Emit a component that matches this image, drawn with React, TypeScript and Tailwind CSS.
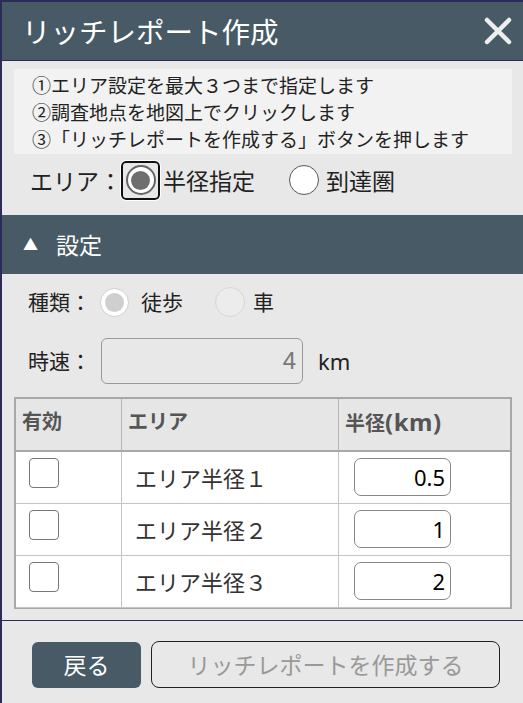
import React from 'react';

const font = "font-['Meiryo','Noto_Sans_CJK_JP',sans-serif]";

const rows = [
  { name: 'エリア半径１', radius: '0.5' },
  { name: 'エリア半径２', radius: '1' },
  { name: 'エリア半径３', radius: '2' },
];

function CloseIcon() {
  return (
    <svg width="28" height="28" viewBox="0 0 28 28" fill="none">
      <path d="M3 3L25 25M25 3L3 25" stroke="#eeeeee" strokeWidth="4.5" strokeLinecap="round" />
    </svg>
  );
}

export default function App() {
  return (
    <div
      className={`w-[523px] h-[703px] bg-[#e8e8e8] border-l-2 border-t-2 border-[#2b2d58] flex flex-col text-[#222] ${font}`}
    >
      <header className="h-[59px] shrink-0 bg-[#475a66] border-b border-[#2b2d58] flex items-center justify-between pl-[20px] pr-[11px]">
        <h1 className="text-[28.5px] text-white leading-none">リッチレポート作成</h1>
        <CloseIcon />
      </header>

      <div className="pl-[12px] pr-[11px] pt-[8px]">
        <div className="h-[85px] bg-[#f2f2f2] pl-[18px] pt-[2px] text-[19px] leading-[27px] text-[#222]">
          <p>①エリア設定を最大３つまで指定します</p>
          <p>②調査地点を地図上でクリックします</p>
          <p>③「リッチレポートを作成する」ボタンを押します</p>
        </div>

        <div className="mt-[6px] h-[40px] flex items-center pl-[16px] text-[23px] whitespace-nowrap">
          <span className="w-[91px] shrink-0">エリア：</span>
          <span className="shrink-0 w-[39px] h-[39px] rounded-[5px] border-2 border-[#111] outline outline-1 outline-white flex items-center justify-center">
            <span className="w-[30px] h-[30px] rounded-full border-2 border-[#666] bg-white flex items-center justify-center">
              <span className="w-[19px] h-[19px] rounded-full bg-[#6f6f6f]" />
            </span>
          </span>
          <span className="ml-[3px]">半径指定</span>
          <span className="shrink-0 ml-[34px] w-[30px] h-[30px] rounded-full border border-[#555] bg-white" />
          <span className="ml-[7px]">到達圏</span>
        </div>
      </div>

      <div className="mt-[15px] h-[59px] shrink-0 bg-[#475a66] flex items-center pl-[21px] text-white text-[23px]">
        <span className="text-[15px]">▲</span>
        <span className="ml-[18px]">設定</span>
      </div>

      <div className="pl-[12px] pr-[11px]">
        <div className="mt-[13px] h-[30px] flex items-center pl-[14px] text-[21px] whitespace-nowrap">
          <span className="w-[72px] shrink-0">種類：</span>
          <span className="shrink-0 w-[29px] h-[29px] rounded-full border border-[#cfcfcf] bg-white flex items-center justify-center">
            <span className="w-[19px] h-[19px] rounded-full bg-[#cfcfcf]" />
          </span>
          <span className="ml-[12px]">徒歩</span>
          <span className="shrink-0 ml-[32px] w-[30px] h-[30px] rounded-full border border-[#d6d6d6] bg-[#ececec]" />
          <span className="ml-[8px]">車</span>
        </div>

        <div className="mt-[21px] h-[46px] flex items-center pl-[14px] text-[21px] whitespace-nowrap">
          <span className="w-[73px] shrink-0">時速：</span>
          <div className="w-[202px] h-[46px] rounded-[6px] border border-[#999] bg-[#e8e8e8] flex items-center justify-end pr-[6px] text-[#777] text-[24px] font-['Liberation_Sans','Noto_Sans_CJK_JP',sans-serif]">
            4
          </div>
          <span className="ml-[15px] text-[22px] font-['Noto_Sans','Noto_Sans_CJK_JP',sans-serif]">km</span>
        </div>

        <div className="mt-[13px] h-[212px] border-2 border-[#a8a8a8] bg-white">
          <div className="h-[53px] bg-[#e6e6e6] border-b-2 border-[#a8a8a8] grid grid-cols-[106px_217px_1fr] text-[20px] font-bold text-[#555]">
            <div className="border-r border-[#b5b5b5] pl-[6px] pt-[7px]">有効</div>
            <div className="border-r border-[#b5b5b5] pl-[6px] pt-[7px]">エリア</div>
            <div className="pl-[6px] pt-[5px] flex items-baseline">
              <span>半径</span>
              <span className="text-[24px] font-['Noto_Sans','Noto_Sans_CJK_JP',sans-serif] tracking-[0.5px]">(km)</span>
            </div>
          </div>
          {rows.map((row) => (
            <div
              key={row.name}
              className="h-[52px] border-b border-[#c4c4c4] grid grid-cols-[106px_217px_1fr] text-[22px]"
            >
              <div className="border-r border-[#c4c4c4] pl-[13px] pt-[6px]">
                <div className="w-[30px] h-[30px] rounded-[4px] border border-[#777] bg-white" />
              </div>
              <div className="border-r border-[#c4c4c4] pl-[13px] flex items-center text-[#333]">
                {row.name}
              </div>
              <div className="pl-[15px] pt-[6px]">
                <div className="w-[97px] h-[38px] rounded-[7px] border border-[#888] bg-white flex items-center justify-end pr-[5px] text-[22px] text-black font-['Noto_Sans','Noto_Sans_CJK_JP',sans-serif]">
                  {row.radius}
                </div>
              </div>
            </div>
          ))}
        </div>
      </div>

      <div className="mt-[11px] border-t border-[#2b2d58] flex items-center gap-[10px] pl-[30px] pt-[20px]">
        <button className="w-[109px] h-[46px] rounded-[6px] bg-[#475a66] text-white text-[23px]">戻る</button>
        <button className="w-[349px] h-[47px] rounded-[8px] border border-[#222] text-[#999] text-[23px]">
          リッチレポートを作成する
        </button>
      </div>
    </div>
  );
}
